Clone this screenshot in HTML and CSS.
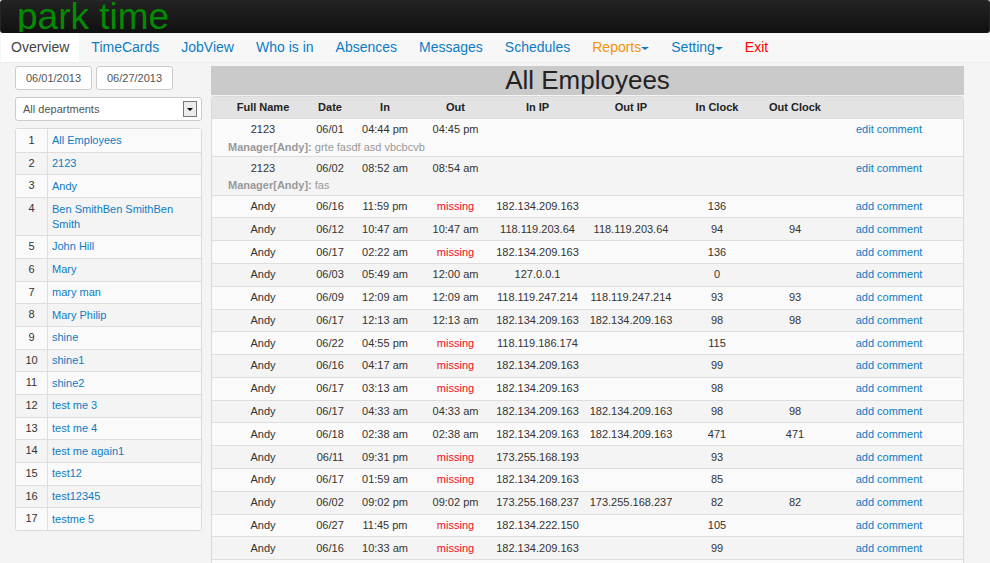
FILE: index.html
```html
<!DOCTYPE html>
<html lang="en">
<head>
<meta charset="utf-8">
<title>park time</title>
<link rel="stylesheet" href="styles.css">
</head>
<body>
<header class="banner"><span class="brand">park time</span></header>
<nav class="tabs">
<a class="active" href="#">Overview</a>
<a href="#">TimeCards</a>
<a href="#">JobView</a>
<a href="#">Who is in</a>
<a href="#">Absences</a>
<a href="#">Messages</a>
<a href="#">Schedules</a>
<a class="menu reports" href="#">Reports</a>
<a class="menu" href="#">Setting</a>
<a class="exit" href="#">Exit</a>
</nav>
<div class="content">
<aside class="sidebar">
<form class="filters">
<div class="dates">
<input type="text" aria-label="From date" value="06/01/2013">
<input type="text" aria-label="To date" value="06/27/2013">
</div>
<div class="department">
<select aria-label="Department"><option>All departments</option></select>
<svg class="arrow" viewBox="0 0 14 16" aria-hidden="true"><rect x=".5" y=".5" width="13" height="15" fill="#ececec" stroke="#777"/><path d="M4 7h6L7 10z" fill="#000"/></svg>
</div>
</form>
<table class="people">
<tbody>
<tr><td>1</td><td><a href="#">All Employees</a></td></tr>
<tr><td>2</td><td><a href="#">2123</a></td></tr>
<tr><td>3</td><td><a href="#">Andy</a></td></tr>
<tr><td>4</td><td><a href="#">Ben SmithBen SmithBen Smith</a></td></tr>
<tr><td>5</td><td><a href="#">John Hill</a></td></tr>
<tr><td>6</td><td><a href="#">Mary</a></td></tr>
<tr><td>7</td><td><a href="#">mary man</a></td></tr>
<tr><td>8</td><td><a href="#">Mary Philip</a></td></tr>
<tr><td>9</td><td><a href="#">shine</a></td></tr>
<tr><td>10</td><td><a href="#">shine1</a></td></tr>
<tr><td>11</td><td><a href="#">shine2</a></td></tr>
<tr><td>12</td><td><a href="#">test me 3</a></td></tr>
<tr><td>13</td><td><a href="#">test me 4</a></td></tr>
<tr><td>14</td><td><a href="#">test me again1</a></td></tr>
<tr><td>15</td><td><a href="#">test12</a></td></tr>
<tr><td>16</td><td><a href="#">test12345</a></td></tr>
<tr><td>17</td><td><a href="#">testme 5</a></td></tr>
</tbody>
</table>
</aside>
<main class="report">
<h1>All Employees</h1>
<table class="records">
<colgroup><col class="c-name"><col class="c-date"><col class="c-in"><col class="c-out"><col class="c-in-ip"><col class="c-out-ip"><col class="c-in-clock"><col class="c-out-clock"><col class="c-comment"></colgroup>
<thead>
<tr><th>Full Name</th><th>Date</th><th>In</th><th>Out</th><th>In IP</th><th>Out IP</th><th>In Clock</th><th>Out Clock</th><th></th></tr>
</thead>
<tbody>
<tr><td>2123</td><td>06/01</td><td>04:44 pm</td><td>04:45 pm</td><td></td><td></td><td></td><td></td><td><a href="#">edit comment</a></td></tr>
<tr class="note"><td colspan="9"><b>Manager[Andy]:</b> grte fasdf asd vbcbcvb</td></tr>
</tbody>
<tbody>
<tr><td>2123</td><td>06/02</td><td>08:52 am</td><td>08:54 am</td><td></td><td></td><td></td><td></td><td><a href="#">edit comment</a></td></tr>
<tr class="note"><td colspan="9"><b>Manager[Andy]:</b> fas</td></tr>
</tbody>
<tbody><tr><td>Andy</td><td>06/16</td><td>11:59 pm</td><td class="missing">missing</td><td>182.134.209.163</td><td></td><td>136</td><td></td><td><a href="#">add comment</a></td></tr></tbody>
<tbody><tr><td>Andy</td><td>06/12</td><td>10:47 am</td><td>10:47 am</td><td>118.119.203.64</td><td>118.119.203.64</td><td>94</td><td>94</td><td><a href="#">add comment</a></td></tr></tbody>
<tbody><tr><td>Andy</td><td>06/17</td><td>02:22 am</td><td class="missing">missing</td><td>182.134.209.163</td><td></td><td>136</td><td></td><td><a href="#">add comment</a></td></tr></tbody>
<tbody><tr><td>Andy</td><td>06/03</td><td>05:49 am</td><td>12:00 am</td><td>127.0.0.1</td><td></td><td>0</td><td></td><td><a href="#">add comment</a></td></tr></tbody>
<tbody><tr><td>Andy</td><td>06/09</td><td>12:09 am</td><td>12:09 am</td><td>118.119.247.214</td><td>118.119.247.214</td><td>93</td><td>93</td><td><a href="#">add comment</a></td></tr></tbody>
<tbody><tr><td>Andy</td><td>06/17</td><td>12:13 am</td><td>12:13 am</td><td>182.134.209.163</td><td>182.134.209.163</td><td>98</td><td>98</td><td><a href="#">add comment</a></td></tr></tbody>
<tbody><tr><td>Andy</td><td>06/22</td><td>04:55 pm</td><td class="missing">missing</td><td>118.119.186.174</td><td></td><td>115</td><td></td><td><a href="#">add comment</a></td></tr></tbody>
<tbody><tr><td>Andy</td><td>06/16</td><td>04:17 am</td><td class="missing">missing</td><td>182.134.209.163</td><td></td><td>99</td><td></td><td><a href="#">add comment</a></td></tr></tbody>
<tbody><tr><td>Andy</td><td>06/17</td><td>03:13 am</td><td class="missing">missing</td><td>182.134.209.163</td><td></td><td>98</td><td></td><td><a href="#">add comment</a></td></tr></tbody>
<tbody><tr><td>Andy</td><td>06/17</td><td>04:33 am</td><td>04:33 am</td><td>182.134.209.163</td><td>182.134.209.163</td><td>98</td><td>98</td><td><a href="#">add comment</a></td></tr></tbody>
<tbody><tr><td>Andy</td><td>06/18</td><td>02:38 am</td><td>02:38 am</td><td>182.134.209.163</td><td>182.134.209.163</td><td>471</td><td>471</td><td><a href="#">add comment</a></td></tr></tbody>
<tbody><tr><td>Andy</td><td>06/11</td><td>09:31 pm</td><td class="missing">missing</td><td>173.255.168.193</td><td></td><td>93</td><td></td><td><a href="#">add comment</a></td></tr></tbody>
<tbody><tr><td>Andy</td><td>06/17</td><td>01:59 am</td><td class="missing">missing</td><td>182.134.209.163</td><td></td><td>85</td><td></td><td><a href="#">add comment</a></td></tr></tbody>
<tbody><tr><td>Andy</td><td>06/02</td><td>09:02 pm</td><td>09:02 pm</td><td>173.255.168.237</td><td>173.255.168.237</td><td>82</td><td>82</td><td><a href="#">add comment</a></td></tr></tbody>
<tbody><tr><td>Andy</td><td>06/27</td><td>11:45 pm</td><td class="missing">missing</td><td>182.134.222.150</td><td></td><td>105</td><td></td><td><a href="#">add comment</a></td></tr></tbody>
<tbody><tr><td>Andy</td><td>06/16</td><td>10:33 am</td><td class="missing">missing</td><td>182.134.209.163</td><td></td><td>99</td><td></td><td><a href="#">add comment</a></td></tr></tbody>
<tbody><tr><td></td><td></td><td></td><td></td><td></td><td></td><td></td><td></td><td></td></tr></tbody>
</table>
</main>
</div>
</body>
</html>
```
FILE: styles.css
```css
* { box-sizing: border-box; }
html { scrollbar-width: none; }
body {
  margin: 0;
  background: #f4f4f4;
  color: #333;
  font: 11px/15px "Liberation Sans", Arial, sans-serif;
}
a { color: #0d7cc4; text-decoration: none; }

.banner {
  height: 33px;
  padding-left: 16px;
  overflow: hidden;
  border: 1px solid #252525;
  border-bottom-color: #111;
  border-radius: 3px;
  background: linear-gradient(#222, #111);
}
.brand { display: block; color: #048a04; font-size: 37px; line-height: 32px; }

.tabs {
  display: flex;
  gap: 2px;
  height: 30px;
  padding-left: 1px;
  border-bottom: 1px solid #ececec;
  background: #f7f7f7;
  font-size: 14px;
  line-height: 29px;
}
.tabs a { padding: 0 10px; white-space: nowrap; }
.tabs .active { background: #fff; color: #444; }
.tabs .reports { color: #f89406; }
.tabs .exit { color: #f00; }
.menu::after {
  content: "";
  display: inline-block;
  vertical-align: middle;
  border: 4px solid transparent;
  border-top: 3px solid #0d7cc4;
  border-bottom: 0;
}

.content {
  display: grid;
  grid-template-columns: 187px 1fr;
  gap: 9px;
  padding: 3px 26px 0 15px;
}
.filters { display: grid; gap: 7px; margin-bottom: 7px; }
.dates { display: flex; gap: 4px; }
.dates input, .department select {
  height: 24px;
  border: 1px solid #ccc;
  border-radius: 3px;
  background: #fff;
  color: #555;
  font: inherit;
}
.dates input { width: 77px; padding: 0; text-align: center; }
.department { position: relative; }
.department select {
  display: block;
  width: 100%;
  padding: 0 7px;
  appearance: none;
}
.arrow {
  position: absolute;
  top: 4px;
  right: 5px;
  width: 14px;
  height: 16px;
  pointer-events: none;
}

table {
  width: 100%;
  border: 1px solid #dadada;
  border-radius: 3px;
  border-collapse: separate;
  border-spacing: 0;
}
td, th { padding: 3px 0; }
.people { height: 403px; }
.people td { padding: 3px 4px; border-top: 1px solid #dedede; }
.people tr:first-child td { border-top-color: transparent; }
.people td:first-child { width: 32px; border-right: 1px solid #dedede; text-align: center; vertical-align: top; }
.people tr:nth-child(odd) { background: #fafafa; }

h1 {
  height: 29px;
  margin: 0 0 1px;
  background: #cacaca;
  color: #222;
  font-size: 26px;
  font-weight: 400;
  line-height: 29px;
  text-align: center;
}
.records { height: 487px; table-layout: fixed; text-align: center; }
.records th { background: #e3e3e3; color: #222; white-space: nowrap; }
.records td { height: 22px; border-top: 1px solid #dedede; white-space: nowrap; }
.records tbody:nth-of-type(odd) { background: #fafafa; }
.records .note td { height: 15px; padding: 0 0 3px 16px; border-top: 0; color: #999; line-height: 12px; text-align: left; vertical-align: top; }
.records .missing { color: #ee0c2c; }
.records td:nth-child(9) { padding-right: 15px; }
.c-name { width: 102px; }
.c-date { width: 32px; }
.c-in { width: 78px; }
.c-out { width: 63px; }
.c-in-ip { width: 101px; }
.c-out-ip { width: 86px; }
.c-in-clock { width: 86px; }
.c-out-clock { width: 70px; }
```
